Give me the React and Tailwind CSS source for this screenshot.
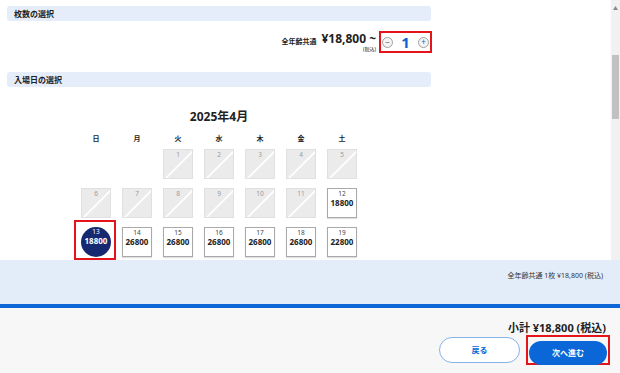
import React from 'react';

const weekdays = ['日', '月', '火', '水', '木', '金', '土'];

// null = blank, { d, off } = closed, { d, price } = open
const days = [
  null, null,
  { d: 1, off: true }, { d: 2, off: true }, { d: 3, off: true }, { d: 4, off: true }, { d: 5, off: true },
  { d: 6, off: true }, { d: 7, off: true }, { d: 8, off: true }, { d: 9, off: true }, { d: 10, off: true }, { d: 11, off: true },
  { d: 12, price: 18800 },
  { d: 13, price: 18800, selected: true },
  { d: 14, price: 26800 }, { d: 15, price: 26800 }, { d: 16, price: 26800 }, { d: 17, price: 26800 }, { d: 18, price: 26800 },
  { d: 19, price: 22800 },
];

function SectionBar({ title }) {
  return (
    <div className="h-[15px] w-[424px] rounded-[3px] bg-[#e4edf9] pl-[7px] text-[8px] font-bold leading-[15px] text-[#222]">
      {title}
    </div>
  );
}

function DayCell({ day }) {
  if (!day) return <div className="h-[30px] w-[30px]" />;

  if (day.off) {
    return (
      <div className="relative h-[30px] w-[30px] overflow-hidden border border-[#e0e0e0] bg-[#ebebeb]">
        <svg className="absolute inset-0" width="30" height="30" viewBox="0 0 30 30">
          <line x1="0" y1="30" x2="30" y2="0" stroke="#ffffff" strokeWidth="1.6" />
        </svg>
        <div className="relative pt-[1px] text-center text-[6.5px] leading-[8px] text-[#9a9a9a]">{day.d}</div>
      </div>
    );
  }

  if (day.selected) {
    return (
      <div className="relative h-[30px] w-[30px]">
        <div className="flex h-[30px] w-[30px] flex-col items-center rounded-full bg-[#16286f] pt-[1px] text-white">
          <div className="text-[6.5px] leading-[8px]">{day.d}</div>
          <div className="text-[8px] font-bold leading-[10px]">{day.price}</div>
        </div>
        <div className="absolute -left-[7px] -top-[7px] h-[40px] w-[42px] border-2 border-[#e5141b]" />
      </div>
    );
  }

  return (
    <div className="flex h-[30px] w-[30px] flex-col items-center border border-[#a9a9a9] bg-white pt-[1px] text-[#222] shadow-[0_1px_1px_rgba(0,0,0,0.12)]">
      <div className="text-[6.5px] leading-[8px] text-[#444]">{day.d}</div>
      <div className="text-[8px] font-bold leading-[10px]">{day.price}</div>
    </div>
  );
}

function Counter() {
  return (
    <div className="ml-[3px] flex h-[22px] w-[53px] items-center justify-between border-2 border-[#e5141b] px-[1px]">
      <div className="flex h-[11px] w-[11px] items-center justify-center rounded-full border border-[#a0a0a0] bg-[#f4f4f4] text-[8px] leading-none text-[#555]">
        −
      </div>
      <div className="text-[15px] font-bold leading-none text-[#0b5fd0]">1</div>
      <div className="flex h-[11px] w-[11px] items-center justify-center rounded-full border border-[#a0a0a0] bg-[#f4f4f4] text-[8px] leading-none text-[#0b5fd0]">
        +
      </div>
    </div>
  );
}

function Scrollbar() {
  return (
    <div className="flex w-[9px] shrink-0 flex-col items-center bg-[#f1f1f1]">
      <svg className="mt-[6px]" width="5" height="4" viewBox="0 0 5 4">
        <polygon points="2.5,0 5,4 0,4" fill="#8a8a8a" />
      </svg>
      <div className="mt-[45px] h-[64px] w-[7px] bg-[#c1c1c1]" />
    </div>
  );
}

export default function App() {
  return (
    <div className="flex h-[373px] w-[620px] flex-col overflow-hidden bg-white font-['Noto_Sans','Noto_Sans_CJK_JP',sans-serif] text-[#222]">
      {/* scroll area */}
      <div className="flex h-[260px] shrink-0 overflow-hidden">
        <div className="flex-1 pl-[7px] pt-[6px]">
          <SectionBar title="枚数の選択" />

          <div className="mt-[10px] flex w-[425px] items-center justify-end">
            <span className="mr-[5px] text-[7px] font-bold">全年齢共通</span>
            <div className="flex flex-col items-end">
              <span className="text-[12px] font-bold leading-[14px]">¥18,800 ~</span>
              <span className="text-[5px] leading-[6px]">(税込)</span>
            </div>
            <Counter />
          </div>

          <div className="mt-[19px]">
            <SectionBar title="入場日の選択" />
          </div>

          <div className="flex w-[424px] justify-center">
            <div className="w-[287px]">
              <div className="mt-[23px] text-center text-[12px] font-bold leading-[14px]">2025年4月</div>
              <div className="mt-[10px] grid grid-cols-7">
                {weekdays.map((w) => (
                  <div key={w} className="text-center text-[7px] font-bold leading-[10px]">{w}</div>
                ))}
              </div>
              <div className="mt-[5px] grid grid-cols-7 gap-y-[9px]">
                {days.map((day, i) => (
                  <div key={i} className="flex justify-center">
                    <DayCell day={day} />
                  </div>
                ))}
              </div>
            </div>
          </div>
        </div>
        <Scrollbar />
      </div>

      {/* summary band */}
      <div className="h-[44px] shrink-0 bg-[#e3edf9] pr-[17px] pt-[11px] text-right text-[7px] leading-[9px] text-[#333]">
        全年齢共通 1枚 ¥18,800 (税込)
      </div>
      <div className="h-[4px] shrink-0 bg-[#0b67d8]" />

      {/* footer */}
      <div className="flex flex-1 flex-col items-end bg-[#f7f7f7]">
        <div className="pr-[14px] pt-[13px] text-[11px] font-bold leading-[14px] text-[#222]">小計 ¥18,800 (税込)</div>
        <div className="flex items-center gap-[6px] pr-[10px]">
          <button className="h-[26px] w-[81px] rounded-full border border-[#86b3ea] bg-white text-[8px] font-bold text-[#0b67d8]">
            戻る
          </button>
          <div className="h-[30px] w-[84px] border-2 border-[#e5141b] p-[1px]">
            <button className="h-full w-full rounded-full bg-[#0b67d8] text-[8px] font-bold text-white">
              次へ進む
            </button>
          </div>
        </div>
      </div>
    </div>
  );
}
